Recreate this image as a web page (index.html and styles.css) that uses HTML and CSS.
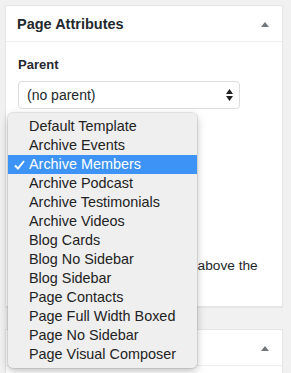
FILE: index.html
```html
<!DOCTYPE html>
<html>
<head>
<meta charset="UTF-8">
<title>Page Attributes</title>
<link rel="stylesheet" href="styles.css">
</head>
<body>
<div class="postbox">
    <div class="hndle">
        <h2>Page Attributes</h2>
        <span class="toggle"></span>
    </div>
    <div class="inside">
        <p class="label">Parent</p>
        <div class="select">
            <span>(no parent)</span>
            <svg class="arrows" width="7" height="12" viewBox="0 0 7 12"><path d="M3.5 0 L7 5 H0 Z M0 7 H7 L3.5 12 Z" fill="#222"/></svg>
        </div>
        <p class="help">Need help? Use the Help tab above the screen title.</p>
    </div>

    <ul class="menu">
        <li>Default Template</li>
        <li>Archive Events</li>
        <li class="current"><svg class="check" width="11" height="10" viewBox="0 0 11 10"><path d="M1 5.5 L4 8.5 L10 1" fill="none" stroke="#fff" stroke-width="2"/></svg>Archive Members</li>
        <li>Archive Podcast</li>
        <li>Archive Testimonials</li>
        <li>Archive Videos</li>
        <li>Blog Cards</li>
        <li>Blog No Sidebar</li>
        <li>Blog Sidebar</li>
        <li>Page Contacts</li>
        <li>Page Full Width Boxed</li>
        <li>Page No Sidebar</li>
        <li>Page Visual Composer</li>
    </ul>
</div>

<div class="postbox second">
    <div class="hndle">
        <span></span>
        <span class="toggle"></span>
    </div>
</div>
</body>
</html>
```

FILE: styles.css
```css
body { margin: 0; padding: 5px 8px 0 5px; background: #f1f1f1; font-family: "Liberation Sans", Arial, sans-serif; color: #23282d; overflow: hidden; height: 373px; box-sizing: border-box; }
.postbox { position: relative; background: #fff; border: 1px solid #e5e5e5; box-shadow: 0 1px 1px rgba(0,0,0,.04); height: 302px; box-sizing: border-box; }
.postbox.second { margin-top: 22px; height: 60px; }
.hndle { display: flex; align-items: center; justify-content: space-between; height: 35px; padding: 0 13px 0 11px; border-bottom: 1px solid #eee; }
.hndle h2 { margin: 0; font-size: 14.5px; font-weight: bold; }
.toggle { width: 0; height: 0; border-left: 4px solid transparent; border-right: 4px solid transparent; border-bottom: 5px solid #72777c; margin-top: 1px; }
.inside { padding: 0 12px; overflow: hidden; height: 264px; }
.label { margin: 15px 0 9px; font-size: 13px; font-weight: 600; }
.select { display: flex; align-items: center; justify-content: space-between; width: 206px; height: 26px; border: 1px solid #ddd; border-radius: 4px; padding: 0 6px 0 8px; font-size: 14px; }
.help { margin: 147px 0 0; width: 248px; font-size: 13.7px; line-height: 19px; }
.menu { position: absolute; left: 2px; top: 107px; width: 189px; margin: 0; padding: 4px 0; list-style: none; background: #efefef; border-radius: 5px; box-shadow: 0 0 0 1px rgba(0,0,0,.08), 0 3px 8px rgba(0,0,0,.25); font-size: 14.4px; z-index: 2; }
.menu li { position: relative; height: 19px; line-height: 19px; padding-left: 21px; color: #222; white-space: nowrap; }
.menu li.current { background: #3d94f6; color: #fff; }
.check { position: absolute; left: 6px; top: 5px; }
```
